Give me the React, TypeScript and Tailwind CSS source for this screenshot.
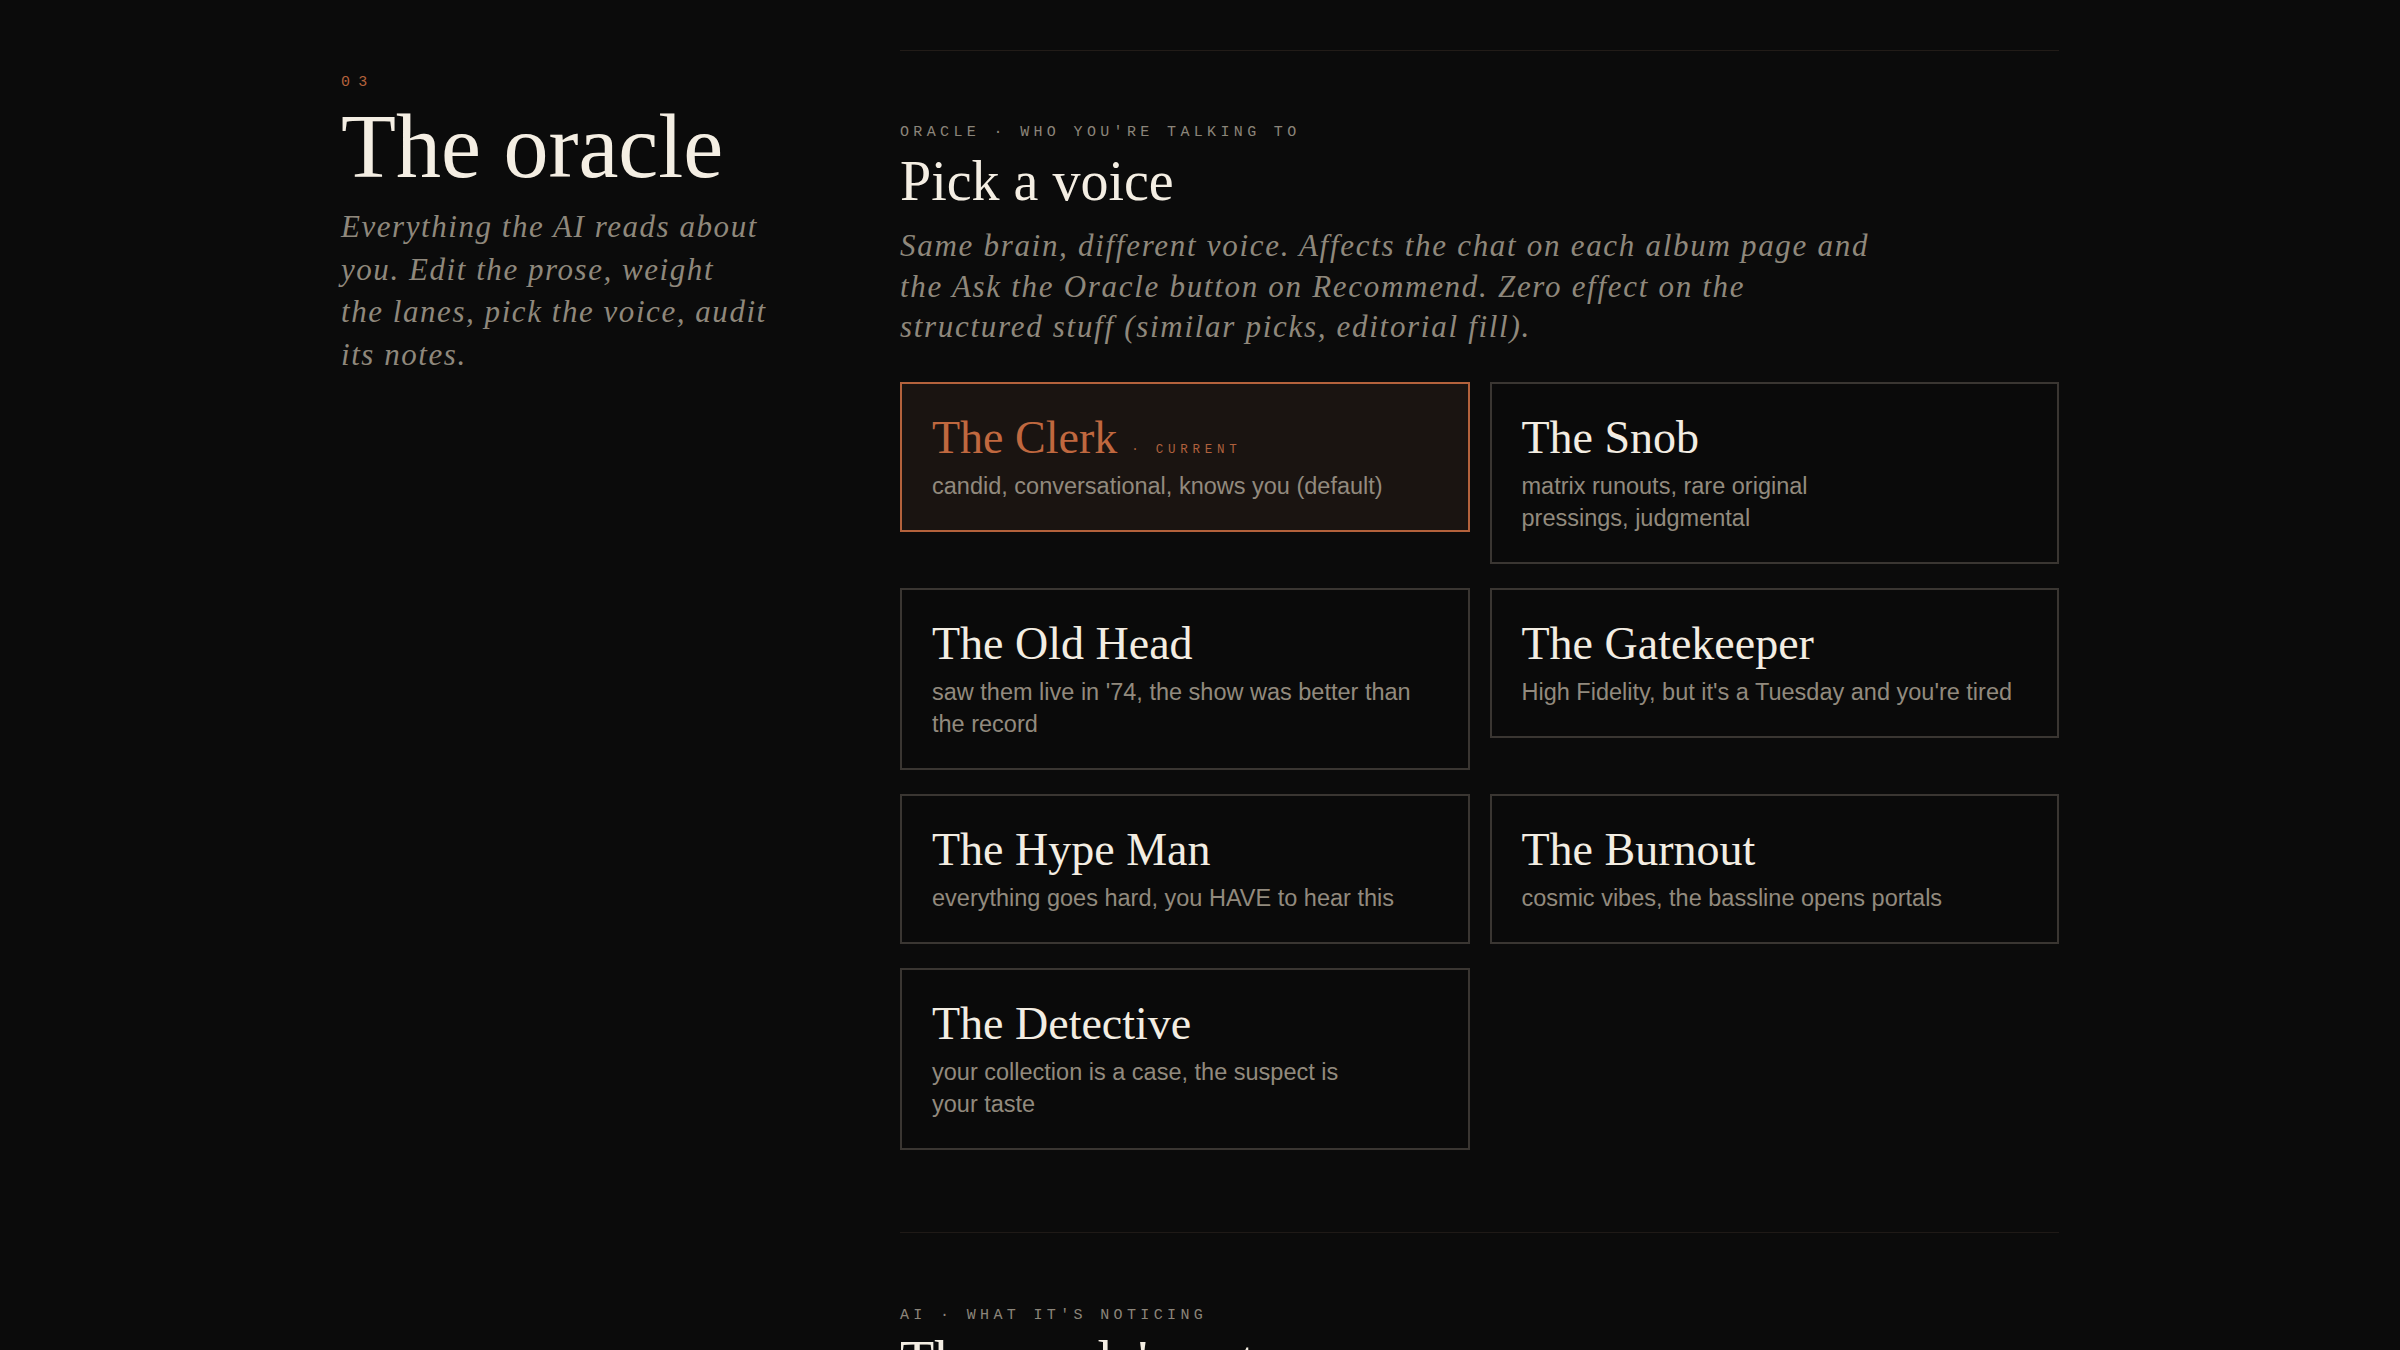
import React from "react";

interface Voice {
    name: string;
    desc: string;
    current?: boolean;
}

const voices: Voice[] = [
    { name: "The Clerk", desc: "candid, conversational, knows you (default)", current: true },
    { name: "The Snob", desc: "matrix runouts, rare original pressings, judgmental" },
    { name: "The Old Head", desc: "saw them live in '74, the show was better than the record" },
    { name: "The Gatekeeper", desc: "High Fidelity, but it's a Tuesday and you're tired" },
    { name: "The Hype Man", desc: "everything goes hard, you HAVE to hear this" },
    { name: "The Burnout", desc: "cosmic vibes, the bassline opens portals" },
    { name: "The Detective", desc: "your collection is a case, the suspect is your taste" },
];

const serif = "font-['Liberation_Serif',_'Times_New_Roman',_serif]";
const mono = "font-['Liberation_Mono',_'DejaVu_Sans_Mono',_monospace]";
const sans = "font-['Liberation_Sans',_Arial,_sans-serif]";

const VoiceCard = ({ voice }: { voice: Voice }) => {
    return (
        <button
            className={
                "text-left border-2 px-[30px] pt-[30px] pb-[28px] " +
                (voice.current ? "border-[#b4623c] bg-[#1a1411]" : "border-[#3a3632] bg-[#0a0a0a]")
            }
        >
            <div className="flex items-baseline">
                <span
                    className={
                        serif +
                        " text-[46px] leading-[48px] " +
                        (voice.current ? "text-[#c0683f]" : "text-[#f3ede2]")
                    }
                >
                    {voice.name}
                </span>
                {voice.current && (
                    <span className={mono + " ml-[14px] text-[12.5px] tracking-[0.38em] text-[#b0613d]"}>
                        · CURRENT
                    </span>
                )}
            </div>
            <p className={sans + " mt-[8px] text-[23.5px] leading-[32px] text-[#928a7e] text-pretty"}>
                {voice.desc}
            </p>
        </button>
    );
};

const App = () => {
    return (
        <div className="min-h-screen bg-[#0b0b0b] text-[#f3ede2]">
            <div className="mx-auto w-[1718px] pt-[50px] grid grid-cols-[479px_1fr] gap-x-[80px]">
                {/* left column */}
                <div className="pt-[23px]">
                    <div className={mono + " text-[15px] leading-[20px] tracking-[0.55em] text-[#b4623c]"}>03</div>
                    <h1 className={serif + " mt-[9px] text-[90px] leading-[90px] text-[#f4eee3]"}>The oracle</h1>
                    <p className={serif + " mt-[14px] italic text-[31px] leading-[42.5px] tracking-[0.05em] text-[#8f887c]"}>
                        Everything the AI reads about
                        <br />
                        you. Edit the prose, weight
                        <br />
                        the lanes, pick the voice, audit
                        <br />
                        its notes.
                    </p>
                </div>

                {/* right column */}
                <div>
                    <section className="border-t border-[#221c18] pt-[72px] pb-[82px]">
                        <div className={mono + " text-[15px] leading-[20px] tracking-[0.29em] text-[#8b857a]"}>
                            ORACLE · WHO YOU'RE TALKING TO
                        </div>
                        <h2 className={serif + " mt-[7px] text-[56px] leading-[62px] text-[#f4eee3]"}>Pick a voice</h2>
                        <p className={serif + " mt-[14px] italic text-[31px] leading-[40.5px] tracking-[0.055em] text-[#8f887c]"}>
                            Same brain, different voice. Affects the chat on each album page and
                            <br />
                            the Ask the Oracle button on Recommend. Zero effect on the
                            <br />
                            structured stuff (similar picks, editorial fill).
                        </p>

                        <div className="mt-[34px] grid grid-cols-2 gap-x-[20px] gap-y-[24px] items-start">
                            {voices.map((v) => (
                                <VoiceCard key={v.name} voice={v} />
                            ))}
                        </div>
                    </section>

                    <section className="border-t border-[#1f1a17] pt-[73px] pb-[80px]">
                        <div className={mono + " text-[15px] leading-[20px] tracking-[0.29em] text-[#8b857a]"}>
                            AI · WHAT IT'S NOTICING
                        </div>
                        <h2 className={serif + " mt-[4px] text-[56px] leading-[62px] text-[#f4eee3]"}>The oracle's notes</h2>
                        <p className={serif + " mt-[14px] italic text-[31px] leading-[40.5px] text-[#8f887c]"}>
                            What it has picked up from your shelves, your plays and your chats.
                        </p>
                    </section>
                </div>
            </div>
        </div>
    );
};

export default App;
